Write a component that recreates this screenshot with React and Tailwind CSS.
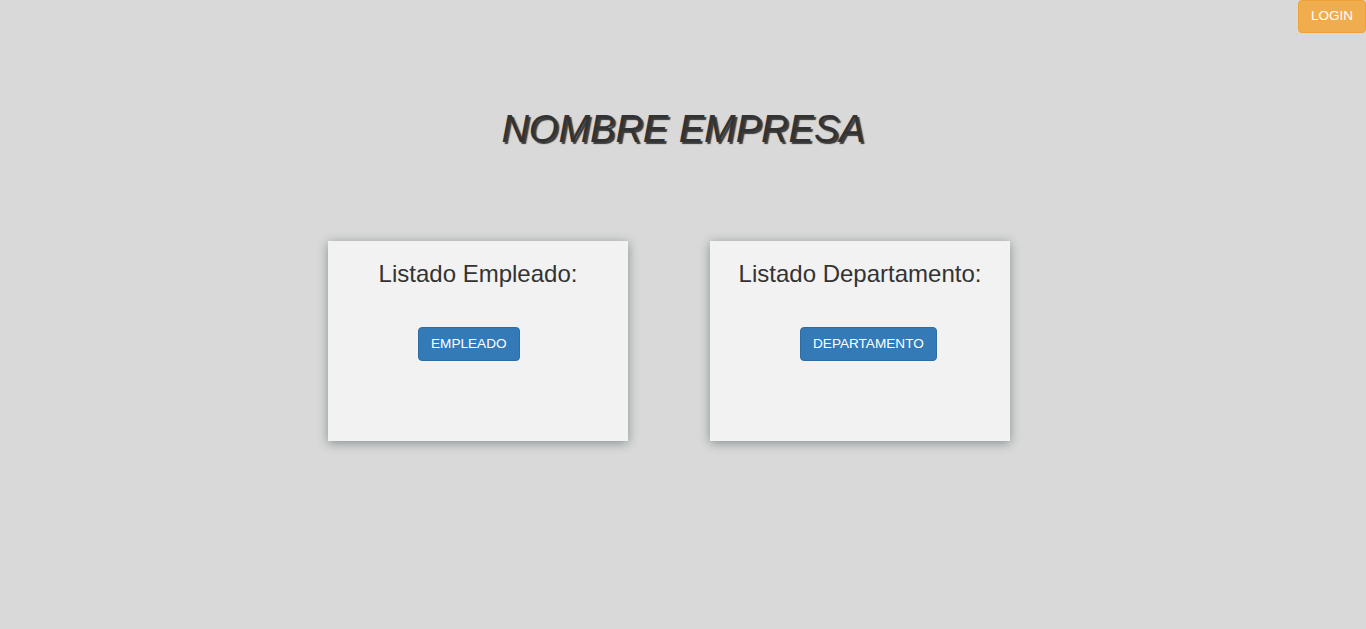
export default function App() {
  const cards = [
    { title: 'Listado Empleado:', label: 'EMPLEADO' },
    { title: 'Listado Departamento:', label: 'DEPARTAMENTO' },
  ];

  return (
    <div className="relative min-h-[629px] bg-[#d9d9d9] font-['Liberation_Sans',Arial,sans-serif] text-[#333]">
      {/* Login */}
      <button className="absolute top-0 right-0 h-[33px] px-[12px] rounded-[4px] bg-[#f0ad4e] border border-[#eea236] text-white text-[13.5px]">
        LOGIN
      </button>

      <h1 className="pt-[106px] text-center text-[38px] leading-[46px] italic [text-shadow:2px_2px_1px_#3a3a3a]">
        NOMBRE EMPRESA
      </h1>

      <div className="mt-[89px] flex justify-center gap-[82px] pr-[28px]">
        {cards.map((c) => (
          <div
            key={c.label}
            className="w-[300px] h-[200px] bg-[#f2f2f2] shadow-[0_2px_10px_rgba(30,55,55,0.45)]"
          >
            <h2 className="pt-[19px] text-center text-[24px] leading-[28px]">{c.title}</h2>
            <div className="mt-[39px] pl-[90px]">
              <button className="h-[34px] px-[12px] rounded-[4px] bg-[#337ab7] border border-[#2e6da4] text-white text-[13.6px]">
                {c.label}
              </button>
            </div>
          </div>
        ))}
      </div>
    </div>
  );
}
